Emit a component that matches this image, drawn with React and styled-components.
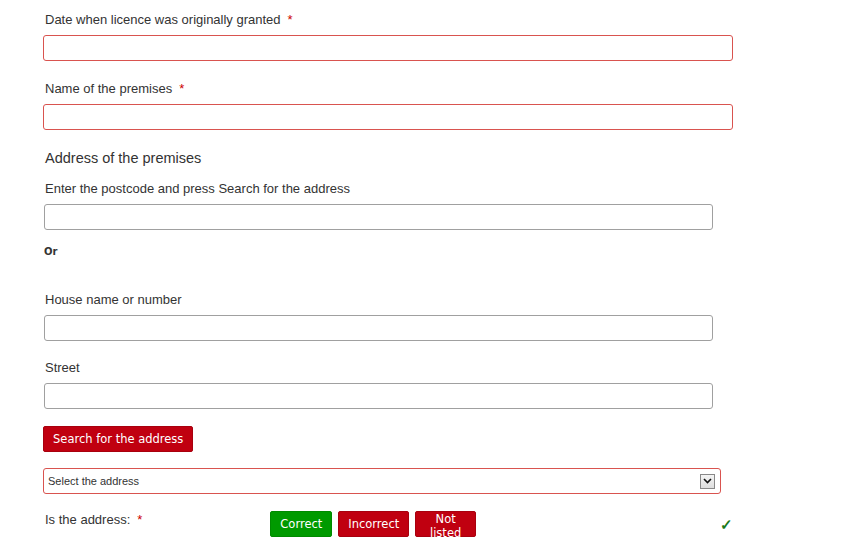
import React from "react";
import styled, { createGlobalStyle } from "styled-components";

const Global = createGlobalStyle`
  body { margin: 0; background: #fff; font-family: "Liberation Sans", Arial, sans-serif; color: #333; }
`;
const Page = styled.div`
  padding: 12px 0 0 43px; width: 690px; display: flex; flex-direction: column;
`;
const Label = styled.div`
  font-size: 13px; padding-left: 2px; height: 16px; line-height: 16px;
  margin-top: ${p => p.mt || 0}px; margin-bottom: ${p => p.mb ?? 7}px; color: #333;
`;
const Star = styled.span` color: #c00; margin-left: 7px; `;
const Input = styled.div`
  height: 24px; box-sizing: content-box;
  width: ${p => (p.wide ? 688 : 667)}px; margin-left: ${p => (p.wide ? 0 : 1)}px;
  border: 1px solid ${p => (p.err ? "#d9534f" : "#a0a0a0")}; border-radius: 3px; background: #fff;
`;
const Heading = styled.div` font-size: 14.5px; padding-left: 2px; margin-top: 20px; color: #333; `;
const Or = styled.div` font-family: "DejaVu Sans", Verdana, sans-serif; font-weight: bold; font-size: 10px; margin-top: 16px; margin-left: 1px; color: #333; `;
const Btn = styled.button`
  font-family: "DejaVu Sans", Verdana, sans-serif; font-size: 11.5px; color: #fff;
  background: ${p => (p.green ? "#009a00" : "#c00010")}; border: 1px solid ${p => (p.green ? "#008a00" : "#a8000e")};
  border-radius: 2px; height: 26px; padding: 0 9px; cursor: pointer;
`;
const Select = styled.div`
  margin-top: 16px; width: 667px; height: 24px; border: 1px solid #d9534f; border-radius: 3px;
  display: flex; align-items: center; justify-content: space-between; padding: 0 5px 0 4px; box-sizing: content-box;
  font-size: 11px; color: #333;
`;
const Caret = styled.div`
  width: 13px; height: 13px; border: 1px solid #888; background: linear-gradient(#f4f4f4, #ddd);
  display: flex; align-items: center; justify-content: center;
`;
const Row = styled.div` display: flex; align-items: center; margin-top: 17px; height: 26px; `;
const RowLabel = styled.div` font-size: 13px; padding-left: 2px; width: 241px; align-self: flex-start; margin-top: 1px; `;
const Btns = styled.div` display: flex; gap: 6px; `;
const Check = styled.div` color: #1a7a1a; font-size: 15px; font-weight: bold; margin-left: 244px; margin-top: 2px; `;

export default function App() {
  return (
    <>
      <Global />
      <Page>
        <Label>Date when licence was originally granted<Star>*</Star></Label>
        <Input wide err />
        <Label mt={20}>Name of the premises<Star>*</Star></Label>
        <Input wide err />
        <Heading>Address of the premises</Heading>
        <Label mt={15}>Enter the postcode and press Search for the address</Label>
        <Input />
        <Or>Or</Or>
        <Label mt={35}>House name or number</Label>
        <Input />
        <Label mt={19}>Street</Label>
        <Input />
        <div style={{ marginTop: 17 }}>
          <Btn>Search for the address</Btn>
        </div>
        <Select>
          <span>Select the address</span>
          <Caret>
            <svg width="9" height="6" viewBox="0 0 9 6"><path d="M1 1l3.5 3.5L8 1" fill="none" stroke="#111" strokeWidth="1.6" /></svg>
          </Caret>
        </Select>
        <Row>
          <RowLabel>Is the address:<Star>*</Star></RowLabel>
          <Btns>
            <Btn green>Correct</Btn>
            <Btn>Incorrect</Btn>
            <Btn>Not listed</Btn>
          </Btns>
          <Check>✓</Check>
        </Row>
      </Page>
    </>
  );
}
